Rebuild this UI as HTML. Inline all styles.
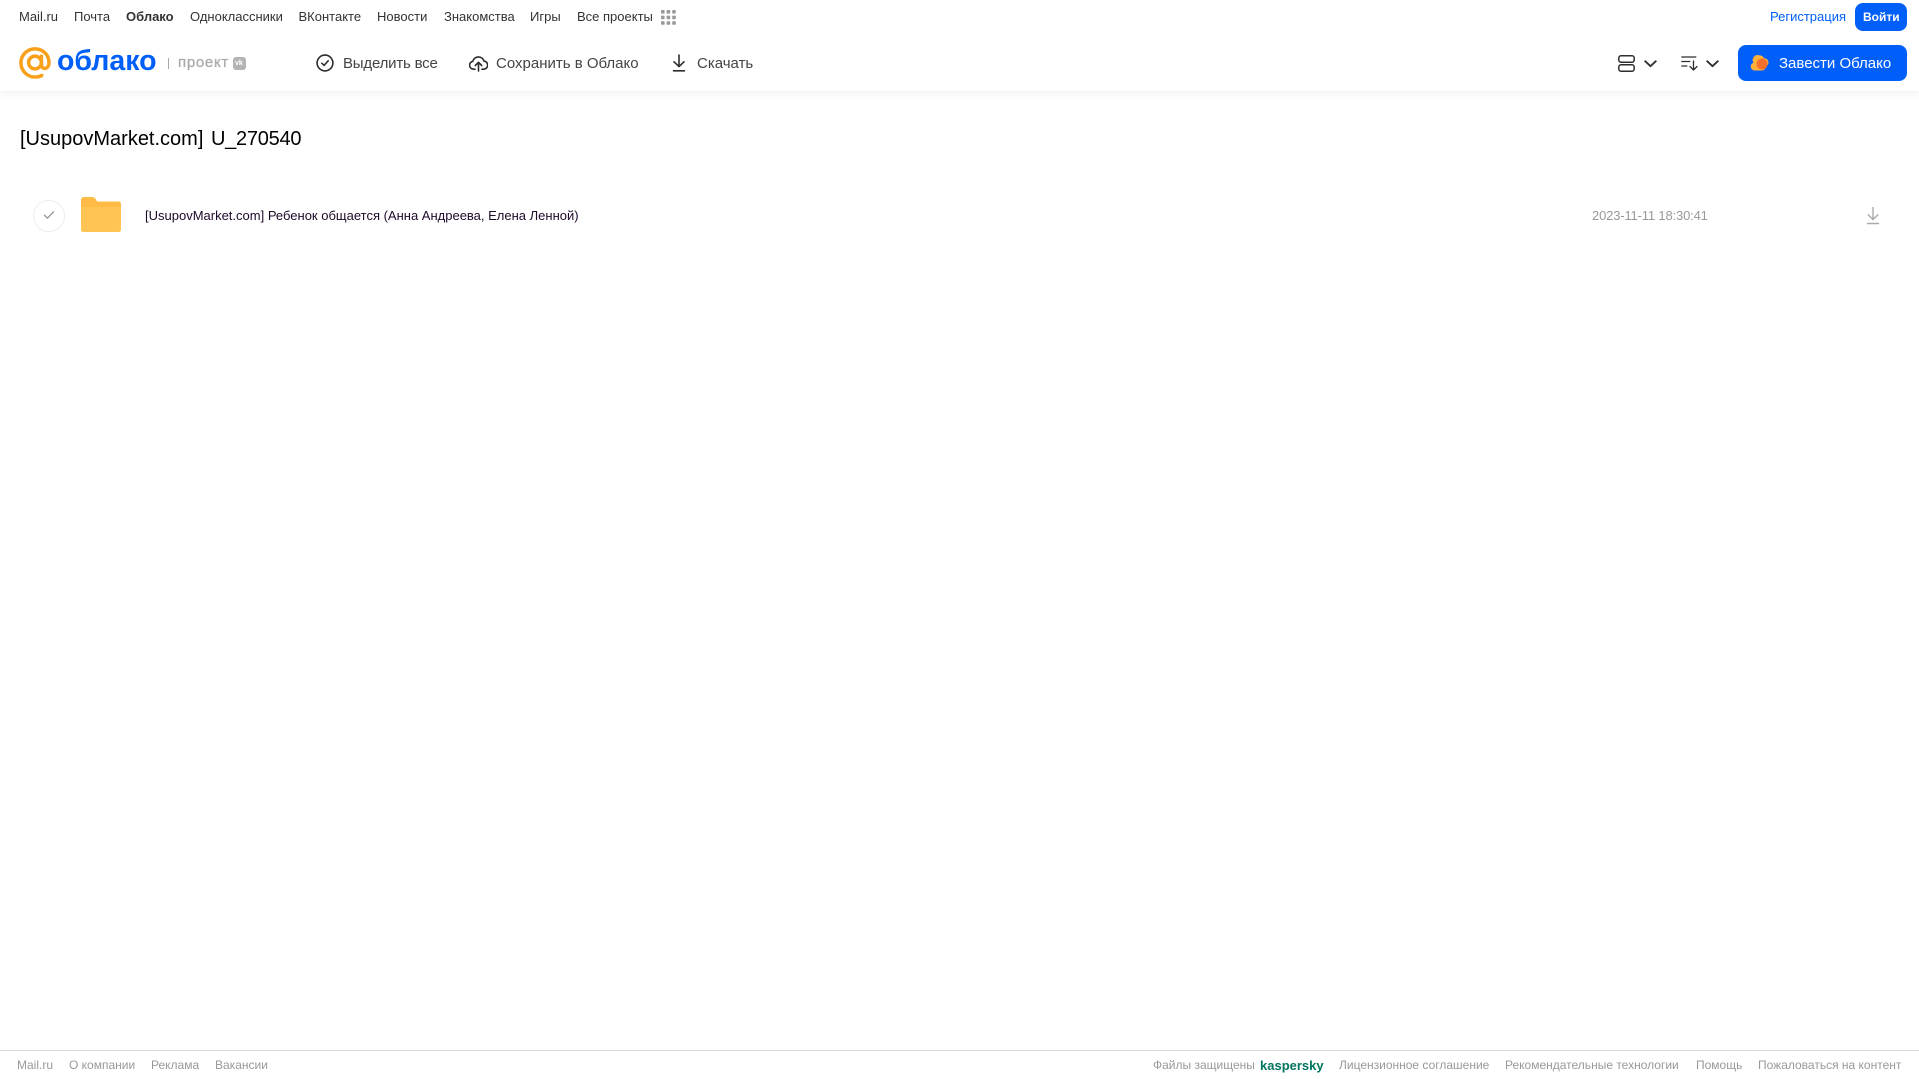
<!DOCTYPE html>
<html lang="ru">
<head>
<meta charset="utf-8">
<title>Облако</title>
<style>
html,body{margin:0;padding:0;background:#fff;width:1919px;height:1079px;overflow:hidden}
body{position:relative;font-family:"Liberation Sans","Noto Sans CJK SC",sans-serif;color:#333}
.t{position:absolute;white-space:nowrap;line-height:1}
.n{font-size:13px;top:10px;color:#333}
.b{font-size:15px;top:56px;color:#444}
.f{font-size:12px;top:1059px;color:#999}
svg{position:absolute;display:block}
</style>
</head>
<body>
<div style="position:absolute;left:0;top:0;width:1919px;height:91px;background:#fff;box-shadow:0 2px 8px rgba(0,0,0,.07)"></div>

<span class="t n" style="left:19px">Mail.ru</span>
<span class="t n" style="left:74px">Почта</span>
<span class="t n" style="left:126px;font-weight:bold">Облако</span>
<span class="t n" style="left:190px">Одноклассники</span>
<span class="t n" style="left:298.500px">ВКонтакте</span>
<span class="t n" style="left:377px">Новости</span>
<span class="t n" style="left:444px">Знакомства</span>
<span class="t n" style="left:530px">Игры</span>
<span class="t n" style="left:577px">Все проекты</span>
<svg style="left:661px;top:10px" width="15" height="15" viewBox="0 0 15 15" fill="#999"><rect width="3.6" height="3.6" rx=".8"/><rect x="5.6" width="3.6" height="3.6" rx=".8"/><rect x="11.2" width="3.6" height="3.6" rx=".8"/><rect y="5.6" width="3.6" height="3.6" rx=".8"/><rect x="5.6" y="5.6" width="3.6" height="3.6" rx=".8"/><rect x="11.2" y="5.6" width="3.6" height="3.6" rx=".8"/><rect y="11.2" width="3.6" height="3.6" rx=".8"/><rect x="5.6" y="11.2" width="3.6" height="3.6" rx=".8"/><rect x="11.2" y="11.2" width="3.6" height="3.6" rx=".8"/></svg>

<span class="t n" style="left:1770px;color:#005ff9">Регистрация</span>
<div style="position:absolute;left:1855px;top:3px;width:52px;height:28px;border-radius:8px;background:#005ff9"></div>
<span class="t" style="left:1863px;top:11px;font-size:12px;color:#fff;font-weight:bold">Войти</span>

<svg style="left:19px;top:47px" width="32" height="32" viewBox="0 0 33 33" fill="none" stroke="#f9a01b" stroke-width="3.6" stroke-linecap="round"><circle cx="16.5" cy="16" r="6.6"/><path d="M23.1 9.5v8.6c0 2.6 1.6 4 3.4 4 2.3 0 4.4-2 4.4-6.1C30.900 8 24.500 1.900 16.500 1.900 8.500 1.900 2 8.200 2 16.300c0 8.300 6.500 14.700 14.500 14.700 2.900 0 5-.6 7-1.700"/></svg>
<span class="t" style="left:57px;top:47px;font-size:28.500px;font-weight:bold;color:#005ff9">облако</span>
<div style="position:absolute;left:168px;top:58px;width:1px;height:11px;background:#aaa"></div>
<span class="t" style="left:178px;top:55px;font-size:15px;color:#aaa;letter-spacing:.7px;-webkit-text-stroke:.3px #aaa">проект</span>
<div style="position:absolute;left:233px;top:57px;width:13px;height:13px;border-radius:3px;background:#b4b4b4"></div>
<span class="t" style="left:235px;top:60px;font-size:7px;font-weight:bold;color:#fff">vk</span>

<svg style="left:316px;top:54px" width="18" height="18" viewBox="0 0 18 18" fill="none" stroke="#2c2d2e" stroke-width="1.6" stroke-linecap="round" stroke-linejoin="round"><circle cx="9" cy="9" r="7.900"/><path d="M5.800 9.200l2.300 2.200 4.100-4.600"/></svg>
<span class="t b" style="left:343px;letter-spacing:-.2px">Выделить все</span>

<svg style="left:469px;top:54px" width="19" height="18" viewBox="0 0 19 18" fill="none" stroke="#2c2d2e" stroke-width="1.6" stroke-linecap="round" stroke-linejoin="round"><path d="M6 15.200H5A4 4 0 0 1 3.800 7.300 5.800 5.800 0 0 1 15 7.100 4 4 0 0 1 14.200 15.200H13"/><path d="M9.500 17V8.500M6.300 11.500l3.200-3.200 3.200 3.200"/></svg>
<span class="t b" style="left:496px">Сохранить в Облако</span>

<svg style="left:671px;top:54px" width="16" height="18" viewBox="0 0 16 18" fill="none" stroke="#2c2d2e" stroke-width="1.6" stroke-linecap="round" stroke-linejoin="round"><path d="M8 1v11.500M3 7.800l5 4.800 5-4.800M2.500 16.800h11"/></svg>
<span class="t b" style="left:697px">Скачать</span>

<svg style="left:1618px;top:55px" width="17" height="17" viewBox="0 0 17 17" fill="none" stroke="#2c2d2e" stroke-width="1.500"><rect x=".8" y=".8" width="15.400" height="6.400" rx="2.200"/><rect x=".8" y="9.800" width="15.400" height="6.400" rx="2.200"/></svg>
<svg style="left:1644px;top:60px" width="13" height="8" viewBox="0 0 13 8" fill="none" stroke="#2c2d2e" stroke-width="1.800" stroke-linecap="round" stroke-linejoin="round"><path d="M1.200 1.200l5.300 5 5.300-5"/></svg>
<svg style="left:1681px;top:56px" width="17" height="15" viewBox="0 0 17 15" fill="none" stroke="#2c2d2e" stroke-width="1.300" stroke-linecap="round" stroke-linejoin="round"><path d="M.8 1h14M.8 5.500h8M.8 10h5M12.500 5v9M9 10.500l3.500 3.500 3.500-3.500"/></svg>
<svg style="left:1706px;top:60px" width="13" height="8" viewBox="0 0 13 8" fill="none" stroke="#2c2d2e" stroke-width="1.800" stroke-linecap="round" stroke-linejoin="round"><path d="M1.200 1.200l5.300 5 5.300-5"/></svg>

<div style="position:absolute;left:1738px;top:45px;width:169px;height:36px;border-radius:8px;background:#005ff9"></div>
<svg style="left:1750px;top:54px" width="20" height="17" viewBox="0 0 20 17"><path d="M4.500 16.500A4 4 0 0 1 3.500 8.700 5 5 0 0 1 9 1.200a5.200 5.200 0 0 1 5 3 4.300 4.300 0 0 1 2 8.200 4.500 4.500 0 0 1-3.800 4.100z" fill="#ffb03a"/><circle cx="12" cy="10" r="5.500" fill="#f4702a"/></svg>
<span class="t" style="left:1779px;top:56px;font-size:15px;color:#fff">Завести Облако</span>

<span class="t" style="left:20px;top:128.500px;font-size:20px;color:#000;word-spacing:2px">[UsupovMarket.com] <span style="letter-spacing:-.25px">U_270540</span></span>

<div style="position:absolute;left:33px;top:200px;width:30px;height:30px;border:1px solid #eceded;border-radius:50%"></div>
<svg style="left:43px;top:210px" width="12" height="10" viewBox="0 0 12 10" fill="none" stroke="#999" stroke-width="1.400" stroke-linecap="round" stroke-linejoin="round"><path d="M1.500 5.200l3 3 6-6.400"/></svg>
<svg style="left:81px;top:197px" width="40" height="35" viewBox="0 0 40 35"><path d="M0 3a3 3 0 0 1 3-3h8c2 0 3 1 4 2.500L16 4.500h21.500a2.500 2.500 0 0 1 2.500 2.500v25.500a2.500 2.500 0 0 1-2.500 2.500H2.500A2.500 2.500 0 0 1 0 32.500z" fill="#ffbb45"/><path d="M0 10h40v22.500a2.500 2.500 0 0 1-2.500 2.500H2.500A2.500 2.500 0 0 1 0 32.500z" fill="#ffc453"/></svg>
<span class="t" style="left:145px;top:209px;font-size:13px;color:#1d0a29">[UsupovMarket.com] Ребенок общается (Анна Андреева, Елена Ленной)</span>
<span class="t" style="left:1592px;top:209px;font-size:13px;color:#999;letter-spacing:-.16px">2023-11-11 18:30:41</span>
<svg style="left:1866px;top:206px" width="14" height="19" viewBox="0 0 14 19" fill="none" stroke="#aaa" stroke-width="1.400"><path d="M7 1v12M1.800 8.500L7 13.500l5.200-5M1 17.500h12"/></svg>

<div style="position:absolute;left:0;top:1050px;width:1919px;height:1px;background:#d9d9d9"></div>
<span class="t f" style="left:17px">Mail.ru</span>
<span class="t f" style="left:69px">О компании</span>
<span class="t f" style="left:151px">Реклама</span>
<span class="t f" style="left:215px">Вакансии</span>
<span class="t f" style="left:1153px">Файлы защищены</span>
<span class="t" style="left:1260px;top:1058.500px;font-size:13px;font-weight:bold;color:#00755f">kaspersky</span>
<span class="t f" style="left:1339px">Лицензионное соглашение</span>
<span class="t f" style="left:1505px">Рекомендательные технологии</span>
<span class="t f" style="left:1696px">Помощь</span>
<span class="t f" style="left:1758px">Пожаловаться на контент</span>
</body>
</html>
